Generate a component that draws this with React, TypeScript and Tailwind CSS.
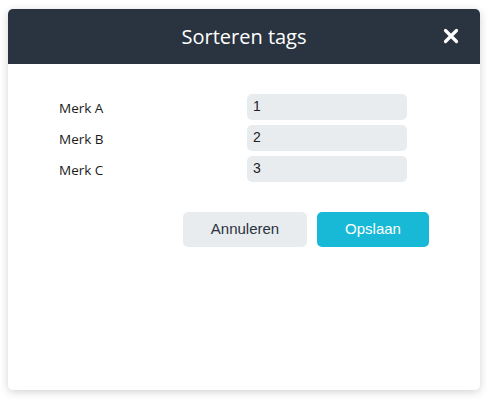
import React from "react";

export default function App() {
  const rows = [
    { label: "Merk A", value: "1" },
    { label: "Merk B", value: "2" },
    { label: "Merk C", value: "3" },
  ];
  return (
    <div className="w-[489px] h-[402px] bg-white pt-[9px] pl-[8px]">
      <div className="w-[472px] h-[381px] bg-white rounded-[5px] shadow-[0_2px_8px_rgba(0,0,0,0.18)] overflow-hidden flex flex-col">
        <div className="h-[55px] bg-[#2a3440] flex items-center justify-center relative">
          <span className="text-white text-[20px] leading-none" style={{ fontFamily: '"Open Sans", sans-serif' }}>
            Sorteren tags
          </span>
          <svg className="absolute left-[435px] top-[19px]" width="16" height="16" viewBox="0 0 16 16">
            <path d="M2.5 2.5 L13.5 13.5 M13.5 2.5 L2.5 13.5" stroke="#ffffff" strokeWidth="3.2" strokeLinecap="round" />
          </svg>
        </div>
        <div className="pt-[30px] flex flex-col gap-[5px]">
          {rows.map((r) => (
            <div key={r.label} className="flex items-center h-[26px]">
              <span className="w-[239px] pl-[51px] pt-[2px] text-[13.5px] text-[#1a1a1a]" style={{ fontFamily: '"Open Sans", sans-serif' }}>
                {r.label}
              </span>
              <div className="w-[160px] h-[26px] bg-[#e9ecef] rounded-[5px] pl-[6px] pb-[2px] flex items-center text-[14px] text-[#222]" style={{ fontFamily: '"Liberation Sans", sans-serif' }}>
                {r.value}
              </div>
            </div>
          ))}
        </div>
        <div className="flex pl-[175px] gap-[10px] mt-[30px]" style={{ fontFamily: '"Liberation Sans", sans-serif' }}>
          <div className="w-[124px] h-[35px] bg-[#e9ecef] rounded-[5px] flex items-center justify-center text-[15px] text-[#2a3440]">
            Annuleren
          </div>
          <div className="w-[112px] h-[35px] bg-[#17b9d6] rounded-[5px] flex items-center justify-center text-[15px] text-white">
            Opslaan
          </div>
        </div>
      </div>
    </div>
  );
}
